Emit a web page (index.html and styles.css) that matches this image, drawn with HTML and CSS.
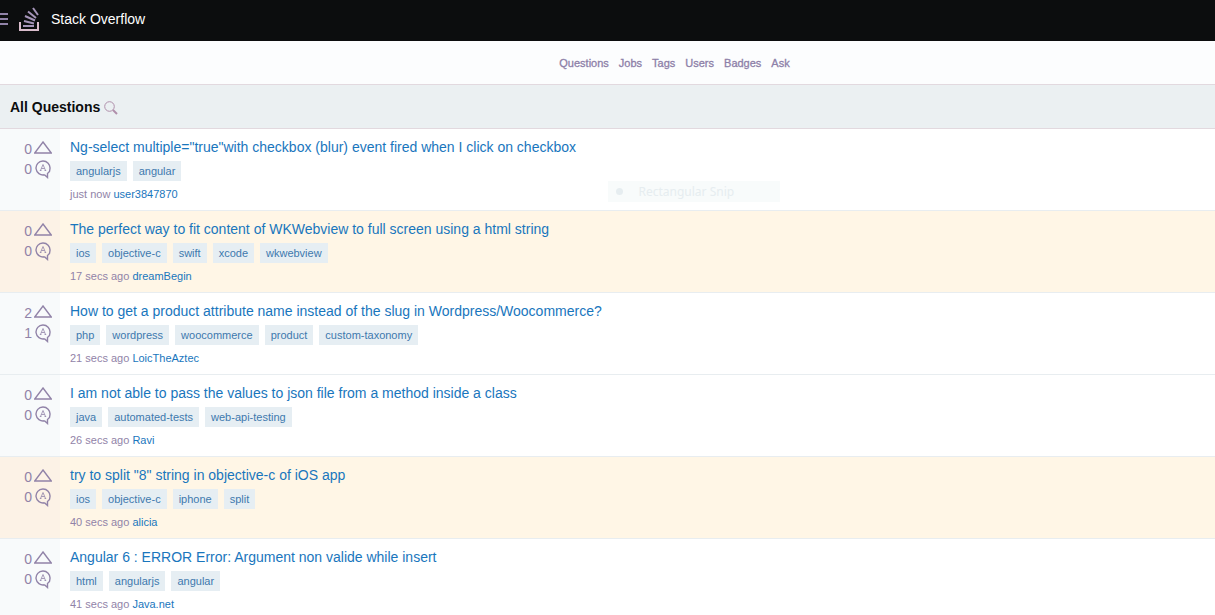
FILE: index.html
```html
<!DOCTYPE html>
<html lang="en">
<head>
<meta charset="utf-8">
<title>Stack Overflow</title>
<link rel="stylesheet" href="styles.css">
</head>
<body>
<svg class="defs" aria-hidden="true">
  <symbol id="vote" viewBox="0 0 18 13"><path d="M9 1 L17.300 12 H0.700 Z"/></symbol>
  <symbol id="answer" viewBox="0 0 18 20"><path d="M10.500 15.800 A7 7 0 1 1 16 9.500 L15.500 12.500 L13.500 14.500 V18.500 L10.500 15.800"/><path class="thin" d="M6.500 11.500 L9 5.500 L11.500 11.500 M7.500 9.500 H10.500 M5.800 11.500 H7.500 M10.500 11.500 H12.200"/></symbol>
</svg>
<header class="topbar">
  <button class="menu" type="button" aria-label="Menu"><svg width="8" height="14" viewBox="0 0 8 14"><path d="M0 2 H8 M0 7 H8 M0 12 H8"/></svg></button>
  <a class="brand" href="#">
    <svg width="22" height="26" viewBox="0 0 22 26"><path class="tray" d="M2 16 V24 H20 V16"/><path class="stack" d="M5 20 H16 M6 15 L16 17.500 M7 10 L17 14.500 M10 5.500 L18 12 M15 2 L20 9"/></svg>
    <span>Stack Overflow</span>
  </a>
</header>
<nav class="nav">
  <a href="#">Questions</a><a href="#">Jobs</a><a href="#">Tags</a><a href="#">Users</a><a href="#">Badges</a><a href="#">Ask</a>
</nav>
<div class="heading">
  <h1>All Questions</h1>
  <button type="button" aria-label="Search"><svg width="14" height="14" viewBox="0 0 14 14"><circle cx="5.500" cy="5.500" r="4.800"/><path class="handle" d="M9 9 L13 13"/></svg></button>
</div>
<main class="questions">
  <article class="question">
    <div class="stats"><span>0<svg class="vote"><use href="#vote"/></svg></span><span>0<svg class="answer"><use href="#answer"/></svg></span></div>
    <div class="summary">
      <h2><a href="#">Ng-select multiple="true"with checkbox (blur) event fired when I click on checkbox</a></h2>
      <div class="tags"><a href="#">angularjs</a><a href="#">angular</a></div>
      <p>just now <a href="#">user3847870</a></p>
    </div>
    <div class="snip"><i></i><span>Rectangular Snip</span></div>
  </article>
  <article class="question marked">
    <div class="stats"><span>0<svg class="vote"><use href="#vote"/></svg></span><span>0<svg class="answer"><use href="#answer"/></svg></span></div>
    <div class="summary">
      <h2><a href="#">The perfect way to fit content of WKWebview to full screen using a html string</a></h2>
      <div class="tags"><a href="#">ios</a><a href="#">objective-c</a><a href="#">swift</a><a href="#">xcode</a><a href="#">wkwebview</a></div>
      <p>17 secs ago <a href="#">dreamBegin</a></p>
    </div>
  </article>
  <article class="question">
    <div class="stats"><span>2<svg class="vote"><use href="#vote"/></svg></span><span>1<svg class="answer"><use href="#answer"/></svg></span></div>
    <div class="summary">
      <h2><a href="#">How to get a product attribute name instead of the slug in Wordpress/Woocommerce?</a></h2>
      <div class="tags"><a href="#">php</a><a href="#">wordpress</a><a href="#">woocommerce</a><a href="#">product</a><a href="#">custom-taxonomy</a></div>
      <p>21 secs ago <a href="#">LoicTheAztec</a></p>
    </div>
  </article>
  <article class="question">
    <div class="stats"><span>0<svg class="vote"><use href="#vote"/></svg></span><span>0<svg class="answer"><use href="#answer"/></svg></span></div>
    <div class="summary">
      <h2><a href="#">I am not able to pass the values to json file from a method inside a class</a></h2>
      <div class="tags"><a href="#">java</a><a href="#">automated-tests</a><a href="#">web-api-testing</a></div>
      <p>26 secs ago <a href="#">Ravi</a></p>
    </div>
  </article>
  <article class="question marked">
    <div class="stats"><span>0<svg class="vote"><use href="#vote"/></svg></span><span>0<svg class="answer"><use href="#answer"/></svg></span></div>
    <div class="summary">
      <h2><a href="#">try to split "8" string in objective-c of iOS app</a></h2>
      <div class="tags"><a href="#">ios</a><a href="#">objective-c</a><a href="#">iphone</a><a href="#">split</a></div>
      <p>40 secs ago <a href="#">alicia</a></p>
    </div>
  </article>
  <article class="question">
    <div class="stats"><span>0<svg class="vote"><use href="#vote"/></svg></span><span>0<svg class="answer"><use href="#answer"/></svg></span></div>
    <div class="summary">
      <h2><a href="#">Angular 6 : ERROR Error: Argument non valide while insert</a></h2>
      <div class="tags"><a href="#">html</a><a href="#">angularjs</a><a href="#">angular</a></div>
      <p>41 secs ago <a href="#">Java.net</a></p>
    </div>
  </article>
</main>
</body>
</html>
```
FILE: styles.css
```css
* { box-sizing: border-box; }
body { margin: 0; background: #fff; color: #9183a8; font: 11px/16px "Liberation Sans", Arial, sans-serif; }
a { color: #1976bd; text-decoration: none; }
h1, h2, p { margin: 0; }
button { padding: 0; border: 0; background: none; display: flex; }
svg { fill: none; stroke: #9183a8; }
.defs { position: absolute; width: 0; height: 0; }

.topbar { display: flex; align-items: center; gap: 10px; height: 41px; padding-bottom: 3px; background: #0c0d0e; }
.menu svg { stroke-width: 2; }
.brand { display: flex; align-items: center; gap: 11px; color: #fff; font-size: 14px; }
.brand svg { stroke-width: 2; }
.brand .tray { stroke: #d9bccb; }
.brand .stack { stroke: #a594b8; }

.nav { display: flex; justify-content: center; align-items: center; gap: 10px; height: 44px; padding-left: 134px; background: #fcfdfe; border-bottom: 1px solid #e2d9df; }
.nav a { color: #8d80a8; -webkit-text-stroke: 0.3px #8d80a8; }

.heading { display: flex; align-items: center; gap: 4px; height: 44px; padding-left: 10px; background: #ebf0f2; border-bottom: 1px solid #e2d9df; }
.heading h1 { color: #0c0d0e; font-size: 14px; line-height: 18px; }
.heading button { padding-top: 3px; }
.heading svg { stroke: #b08fab; }
.heading .handle { stroke-width: 2; }

.question { position: relative; display: flex; border-bottom: 1px solid #e8edf0; }
.marked { background: #fff6e6; }
.stats { width: 60px; flex: none; padding: 10px 8px 0 0; background: #f8fafb; font-size: 14px; }
.marked .stats { background: #fcf2e6; }
.stats span { display: flex; align-items: center; justify-content: flex-end; gap: 2px; height: 20px; }
.stats svg { width: 18px; stroke-width: 1.4; }
.vote { height: 13px; margin-bottom: 3px; }
.answer { height: 20px; }
.thin { stroke-width: 0.8; }

.summary { flex: 1; padding: 9px 10px 8px; }
.summary h2 { font-size: 14px; line-height: 18px; font-weight: normal; }
.tags { display: flex; flex-wrap: wrap; gap: 6px; margin: 5px 0; }
.tags a { padding: 0 6px; line-height: 20px; background: #e6eef3; color: #4079ae; }

.snip { position: absolute; left: 50%; top: 52px; display: flex; align-items: center; gap: 16px; width: 172px; height: 21px; padding-left: 8px; background: #f8fbfb; color: #e6edf0; font: 12px "Noto Sans", sans-serif; }
.snip i { width: 7px; height: 7px; border-radius: 50%; background: #e6edf0; }
```
